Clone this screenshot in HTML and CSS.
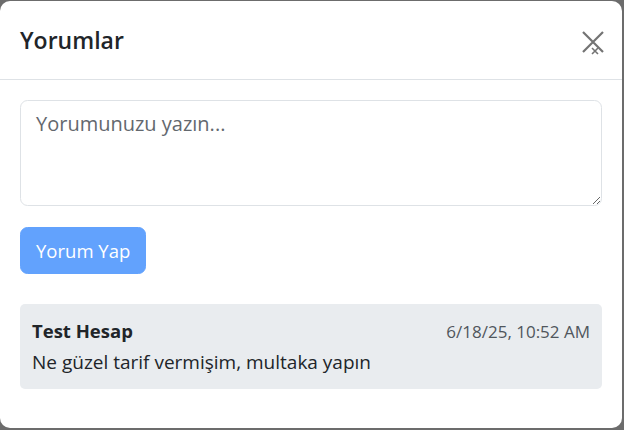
FILE: index.html
```html
<!DOCTYPE html>
<html lang="tr">
<head>
<meta charset="utf-8">
<title>Yorumlar</title>
<link rel="stylesheet" href="styles.css">
</head>
<body>
<div class="modal">
  <div class="modal-header">
    <h5 class="modal-title">Yorumlar</h5>
    <button class="btn-close" type="button" aria-label="Close">
      <svg class="close-icon" width="24" height="26" viewBox="0 0 24 26">
        <path d="M2 2 L22 22 M22 2 L2 22" stroke="#737373" stroke-width="2.2" fill="none"/>
        <path d="M11 18 L17 24 M17 18 L11 24" stroke="#737373" stroke-width="1.6" fill="none"/>
      </svg>
    </button>
  </div>
  <div class="modal-body">
    <textarea class="form-control" placeholder="Yorumunuzu yazın..."></textarea>
    <button class="btn-primary" type="button">Yorum Yap</button>
    <div class="comment">
      <div class="comment-head">
        <strong class="comment-author">Test Hesap</strong>
        <span class="comment-date">6/18/25, 10:52 AM</span>
      </div>
      <div class="comment-text">Ne güzel tarif vermişim, multaka yapın</div>
    </div>
  </div>
</div>
</body>
</html>
```

FILE: styles.css
```css
* { box-sizing: border-box; }
html, body { height: 100%; }
body {
  margin: 0;
  padding: 1px 2px 2px 0;
  background: #6c6c6c;
  font-family: "Open Sans", "Noto Sans", sans-serif;
  color: #212529;
}
.modal {
  height: 100%;
  background: #fff;
  border-radius: 10px;
  display: flex;
  flex-direction: column;
}
.modal-header {
  display: flex;
  align-items: center;
  justify-content: space-between;
  padding: 20px 17px 20px 20px;
  border-bottom: 1px solid #dee2e6;
}
.modal-title {
  margin: 0;
  font-size: 23px;
  line-height: 38px;
  font-weight: 600;
  color: #212529;
}
.btn-close {
  border: 0;
  background: transparent;
  padding: 0;
  width: 24px;
  height: 26px;
  margin-top: 5px;
}
.close-icon { display: block; }
.modal-body {
  padding: 20px;
  display: flex;
  flex-direction: column;
  align-items: flex-start;
}
.form-control {
  width: 100%;
  height: 106px;
  padding: 7.5px 15px;
  border: 1px solid #dee2e6;
  border-radius: 7.5px;
  font-family: inherit;
  font-size: 20px;
  line-height: 30px;
  color: #212529;
  resize: vertical;
  margin: 0;
}
.form-control::placeholder { color: #63686e; }
.btn-primary {
  margin-top: 21px;
  padding: 7.5px 15px;
  border: 1px solid #62a2fd;
  background: #62a2fd;
  color: #fff;
  border-radius: 7.5px;
  font-family: inherit;
  font-size: 18.5px;
  line-height: 30px;
}
.comment {
  margin-top: 30px;
  width: 100%;
  background: #e9ecef;
  border-radius: 5px;
  padding: 12px;
}
.comment-head {
  display: flex;
  justify-content: space-between;
  align-items: baseline;
}
.comment-author {
  font-size: 18.5px;
  line-height: 30px;
  font-weight: 700;
}
.comment-date {
  font-size: 17px;
  line-height: 30px;
  color: #50565c;
}
.comment-text {
  font-size: 19px;
  line-height: 30px;
}
```
